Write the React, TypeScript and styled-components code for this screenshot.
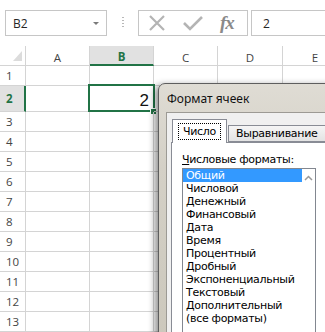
import styled, { createGlobalStyle } from "styled-components";

const GlobalStyle = createGlobalStyle`
  html, body {
    margin: 0;
    padding: 0;
    background: #fff;
  }
  body {
    font-family: "Open Sans", "Liberation Sans", sans-serif;
  }
`;

const COLS = [
  { name: "A", width: 64 },
  { name: "B", width: 64 },
  { name: "C", width: 64 },
  { name: "D", width: 65 },
  { name: "E", width: 65 },
];

const ROWS = [20, 26, 20, 20, 20, 20, 20, 20, 20, 20, 20, 20, 20];

const FORMATS = [
  "Общий",
  "Числовой",
  "Денежный",
  "Финансовый",
  "Дата",
  "Время",
  "Процентный",
  "Дробный",
  "Экспоненциальный",
  "Текстовый",
  "Дополнительный",
  "(все форматы)",
];

const App = () => {
  return (
    <>
      <GlobalStyle />
      <Screen>
        <FormulaBar>
          <NameBox>
            <span>B2</span>
            <DropArrow />
          </NameBox>
          <Grip>
            <i />
            <i />
            <i />
            <i />
          </Grip>
          <FxBox>
            <svg width="20" height="16" viewBox="0 0 20 16">
              <path d="M3 1 L17 15 M17 1 L3 15" stroke="#b4b4b4" strokeWidth="2.2" fill="none" />
            </svg>
            <svg width="22" height="16" viewBox="0 0 22 16">
              <path d="M2 8 L8 14 L20 2" stroke="#b4b4b4" strokeWidth="2.6" fill="none" />
            </svg>
            <FxLabel>fx</FxLabel>
          </FxBox>
          <FormulaInput>2</FormulaInput>
        </FormulaBar>

        <Sheet>
          <Row height={20}>
            <Corner>
              <CornerMark />
            </Corner>
            {COLS.map((c) => (
              <ColHead key={c.name} width={c.width} active={c.name === "B"}>
                {c.name}
              </ColHead>
            ))}
          </Row>
          {ROWS.map((h, i) => (
            <Row key={i} height={h}>
              <RowHead active={i === 1}>{i + 1}</RowHead>
              {COLS.map((c) => (
                <Cell key={c.name} width={c.width}>
                  {i === 1 && c.name === "B" && (
                    <>
                      <Value>2</Value>
                      <Selection />
                      <FillHandle />
                    </>
                  )}
                </Cell>
              ))}
            </Row>
          ))}
        </Sheet>

        <Dialog>
          <TitleBar>Формат ячеек</TitleBar>
          <Body>
            <Tabs>
              <Tab selected>
                <Focus>Число</Focus>
              </Tab>
              <Tab>Выравнивание</Tab>
            </Tabs>
            <Panel>
              <Label>
                <u>Ч</u>исловые форматы:
              </Label>
              <ListBox>
                <Items>
                  {FORMATS.map((f, i) => (
                    <Item key={f} selected={i === 0}>
                      {f}
                    </Item>
                  ))}
                </Items>
                <ScrollBar>
                  <svg width="9" height="6" viewBox="0 0 9 6">
                    <path d="M1 5 L4.5 1.5 L8 5" stroke="#9a9a9a" strokeWidth="1.5" fill="none" />
                  </svg>
                </ScrollBar>
              </ListBox>
            </Panel>
          </Body>
        </Dialog>
      </Screen>
    </>
  );
};

const Screen = styled.div`
  position: relative;
  width: 325px;
  height: 332px;
  overflow: hidden;
  background: #fff;
`;

const FormulaBar = styled.div`
  display: flex;
  align-items: flex-start;
  height: 46px;
  padding: 10px 0 0 5px;
  box-sizing: border-box;
`;

const NameBox = styled.div`
  display: flex;
  align-items: center;
  justify-content: space-between;
  width: 102px;
  height: 26px;
  padding: 0 7px 0 7px;
  box-sizing: border-box;
  border: 1px solid #c6c6c6;
  font-size: 12px;
  color: #262626;
`;

const DropArrow = styled.div`
  width: 0;
  height: 0;
  border-left: 3px solid transparent;
  border-right: 3px solid transparent;
  border-top: 3px solid #7a7a7a;
  margin-top: 1px;
`;

const Grip = styled.div`
  display: flex;
  flex-direction: column;
  gap: 2px;
  margin: 7px 14px 0 15px;

  i {
    display: block;
    width: 2px;
    height: 1px;
    background: #b8b8b8;
  }
`;

const FxBox = styled.div`
  display: flex;
  align-items: center;
  width: 110px;
  height: 26px;
  padding-left: 8px;
  box-sizing: border-box;
  border: 1px solid #c6c6c6;
  gap: 15px;
`;

const FxLabel = styled.span`
  font-family: "Liberation Serif", "DejaVu Serif", serif;
  font-style: italic;
  font-weight: bold;
  font-size: 19px;
  color: #8a8a8a;
  margin-left: 1px;
  letter-spacing: -1px;
`;

const FormulaInput = styled.div`
  flex: 1;
  height: 26px;
  margin-left: 3px;
  padding-left: 11px;
  box-sizing: border-box;
  border: 1px solid #c6c6c6;
  border-right: none;
  display: flex;
  align-items: center;
  font-size: 12px;
  color: #262626;
`;

const Sheet = styled.div`
  display: flex;
  flex-direction: column;
`;

const Row = styled.div<{ height: number }>`
  display: flex;
  height: ${(p) => p.height}px;
  flex-shrink: 0;
`;

const Corner = styled.div`
  width: 26px;
  flex-shrink: 0;
  box-sizing: border-box;
  border-right: 1px solid #d4d4d4;
  border-bottom: 1px solid #d4d4d4;
  display: flex;
  align-items: flex-end;
  justify-content: flex-end;
  padding: 0 3px 4px 0;
`;

const CornerMark = styled.div`
  width: 0;
  height: 0;
  border-left: 9px solid transparent;
  border-bottom: 10px solid #dcdcdc;
`;

const ColHead = styled.div<{ width: number; active?: boolean }>`
  width: ${(p) => p.width}px;
  flex-shrink: 0;
  box-sizing: border-box;
  display: flex;
  align-items: center;
  justify-content: center;
  padding-top: 3px;
  font-size: 11.5px;
  border-right: 1px solid #d4d4d4;
  border-bottom: ${(p) => (p.active ? "2px solid #217346" : "1px solid #d4d4d4")};
  background: ${(p) => (p.active ? "#e1e1e1" : "#fff")};
  color: ${(p) => (p.active ? "#217346" : "#444")};
  font-weight: ${(p) => (p.active ? 700 : 400)};
`;

const RowHead = styled.div<{ active?: boolean }>`
  width: 26px;
  flex-shrink: 0;
  box-sizing: border-box;
  display: flex;
  align-items: center;
  padding-left: 6px;
  font-size: 11.5px;
  border-bottom: 1px solid #d4d4d4;
  border-right: ${(p) => (p.active ? "2px solid #217346" : "1px solid #d4d4d4")};
  background: ${(p) => (p.active ? "#e1e1e1" : "#fff")};
  color: ${(p) => (p.active ? "#217346" : "#444")};
  font-weight: ${(p) => (p.active ? 700 : 400)};
`;

const Cell = styled.div<{ width: number }>`
  position: relative;
  width: ${(p) => p.width}px;
  flex-shrink: 0;
  box-sizing: border-box;
  border-right: 1px solid #d4d4d4;
  border-bottom: 1px solid #d4d4d4;
  display: flex;
  align-items: flex-end;
  justify-content: flex-end;
`;

const Value = styled.span`
  font-family: "Liberation Sans", sans-serif;
  font-size: 17px;
  line-height: 20px;
  color: #111;
  padding-right: 4px;
`;

const Selection = styled.div`
  position: absolute;
  left: -2px;
  top: -2px;
  right: -2px;
  bottom: -1px;
  border: 2px solid #217346;
`;

const FillHandle = styled.div`
  position: absolute;
  right: -4px;
  bottom: -4px;
  width: 5px;
  height: 5px;
  background: #217346;
  border: 1px solid #fff;
`;

const Dialog = styled.div`
  position: absolute;
  left: 158px;
  top: 83px;
  width: 190px;
  height: 280px;
  box-sizing: border-box;
  display: flex;
  flex-direction: column;
  padding-left: 7px;
  border: 1px solid #5e5e5e;
  border-radius: 7px 0 0 0;
  background: linear-gradient(180deg, #dfdcd4 0%, #d4d0c6 30%, #cbc7bb 100%);
  box-shadow: -3px 2px 7px rgba(0, 0, 0, 0.45);
`;

const TitleBar = styled.div`
  height: 28px;
  flex-shrink: 0;
  display: flex;
  align-items: center;
  padding-left: 1px;
  font-family: "Noto Sans", "Open Sans", sans-serif;
  font-size: 12px;
  color: #111;
`;

const Body = styled.div`
  flex: 1;
  display: flex;
  flex-direction: column;
  padding: 6px 0 0 4px;
  border: 1px solid #9c9a94;
  border-right: none;
  background: #f0f0f0;
  font-family: "DejaVu Sans", sans-serif;
  font-size: 11px;
  letter-spacing: -0.3px;
  color: #000;
`;

const Tabs = styled.div`
  display: flex;
  align-items: flex-end;
  height: 23px;
  flex-shrink: 0;
`;

const Tab = styled.div<{ selected?: boolean }>`
  position: relative;
  z-index: 1;
  box-sizing: border-box;
  display: flex;
  align-items: center;
  height: ${(p) => (p.selected ? 24 : 17)}px;
  margin-bottom: ${(p) => (p.selected ? -1 : 0)}px;
  margin-left: 1px;
  padding: ${(p) => (p.selected ? "0 5px" : "0 7px")};
  border: 1px solid #898c95;
  border-bottom: ${(p) => (p.selected ? "none" : "1px solid #898c95")};
  background: ${(p) => (p.selected ? "#fff" : "linear-gradient(180deg, #f5f5f5 0%, #e3e3e3 100%)")};
`;

const Focus = styled.span`
  border: 1px dotted #000;
  padding: 1px 4px 1px 4px;
  line-height: 13px;
`;

const Panel = styled.div`
  flex: 1;
  padding: 10px 0 0 10px;
  border: 1px solid #898c95;
  border-right: none;
  background: #fff;
`;

const Label = styled.div`
  line-height: 13px;
  height: 13px;
`;

const ListBox = styled.div`
  display: flex;
  width: 134px;
  height: 180px;
  margin-top: 2px;
  box-sizing: border-box;
  border: 1px solid #828790;
  background: #fff;
`;

const Items = styled.div`
  width: 119px;
  display: flex;
  flex-direction: column;
`;

const Item = styled.div<{ selected?: boolean }>`
  height: 13px;
  line-height: 13px;
  padding-left: 3px;
  white-space: nowrap;
  background: ${(p) => (p.selected ? "#3399ff" : "transparent")};
  color: ${(p) => (p.selected ? "#fff" : "#000")};
`;

const ScrollBar = styled.div`
  flex: 1;
  display: flex;
  justify-content: center;
  padding-top: 6px;
  background: #fff;
`;

export default App;
